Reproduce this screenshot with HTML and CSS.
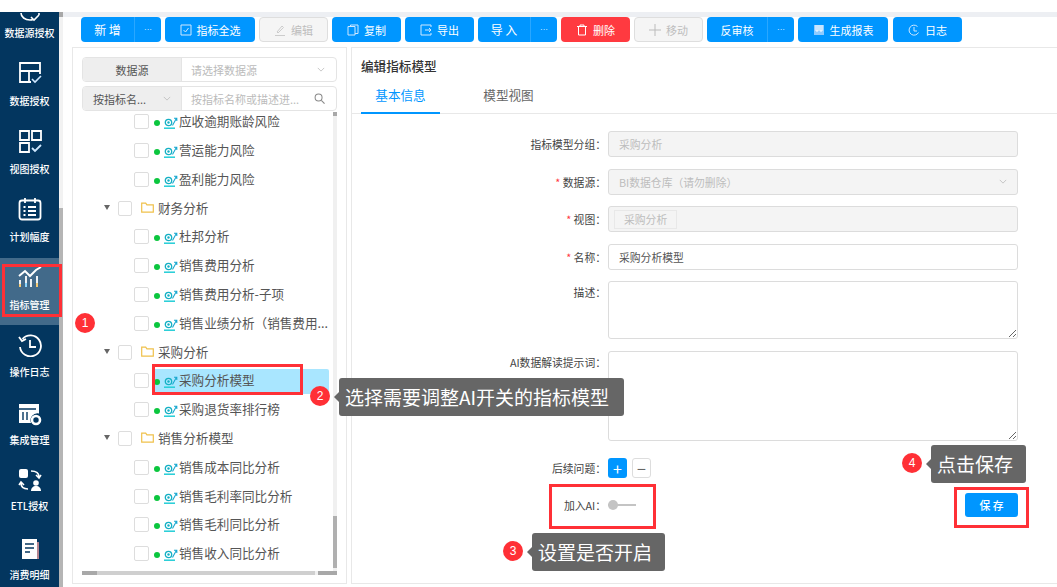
FILE: index.html
```html
<!DOCTYPE html>
<html lang="zh-CN">
<head>
<meta charset="utf-8">
<title>指标管理</title>
<link rel="stylesheet" href="styles.css">
</head>
<body>
<svg class="defs" width="0" height="0" aria-hidden="true">
  <symbol id="metric" viewBox="0 0 14 14">
    <circle cx="4.500" cy="6.500" r="3.200" fill="none" stroke="#14b0c4" stroke-width="1.300"/>
    <circle cx="4.500" cy="6.500" r="1.200" fill="#14b0c4"/>
    <path d="M8.500 9.500 12.300 2.500M10 2.200h2.800v2.800" fill="none" stroke="#19a8d0" stroke-width="1.100"/>
    <path d="M0 12.200h11" stroke="#22cdd6" stroke-width="1.500"/>
  </symbol>
  <symbol id="folder" viewBox="0 0 13 11">
    <path d="M.7 1.200h4l1.200 1.600h6.400v7.400H.7z" fill="none" stroke="#f0c14b" stroke-width="1.200"/>
  </symbol>
  <symbol id="chev" viewBox="0 0 10 6">
    <path d="M1 1l4 4 4-4" fill="none" stroke="#bbb" stroke-width="1"/>
  </symbol>
</svg>
<div class="topbar"></div>
<div class="app">
  <nav class="sidebar">
    <div class="nav-item first">
      <svg class="nav-icon" viewBox="0 0 24 14"><path d="M3 1c0 4 4 7 9 7 1 0 2 0 3-.5M21 1v2" fill="none" stroke="#fff" stroke-width="1.600"/><path d="M13 5l3 3 5-5" fill="none" stroke="#fff" stroke-width="1.600"/></svg>
      <span>数据源授权</span>
    </div>
    <div class="nav-item">
      <svg class="nav-icon" viewBox="0 0 24 24"><path d="M13 21H2V2h20v11M2 10h20M11 10v11" fill="none" stroke="#fff" stroke-width="1.800"/><path d="M14 18l3 3 6-6" fill="none" stroke="#cfe8ff" stroke-width="1.600"/></svg>
      <span>数据授权</span>
    </div>
    <div class="nav-item">
      <svg class="nav-icon" viewBox="0 0 24 24"><path d="M2 2h9v9H2zM14 2h9v9h-9zM2 14h9v9H2z" fill="none" stroke="#fff" stroke-width="1.800"/><path d="M14 19l3 3 6-6" fill="none" stroke="#cfe8ff" stroke-width="1.800"/></svg>
      <span>视图授权</span>
    </div>
    <div class="nav-item plan">
      <svg class="nav-icon" viewBox="0 0 24 24"><rect x="1.500" y="3.500" width="21" height="19" rx="2.500" fill="none" stroke="#fff" stroke-width="1.800"/><path d="M7 1v5M17 1v5M10 10h8M10 14h8M10 18h8M5.500 10h2M5.500 14h2M5.500 18h2" fill="none" stroke="#fff" stroke-width="1.800"/></svg>
      <span>计划幅度</span>
    </div>
    <div class="nav-item active">
      <svg class="nav-icon" viewBox="0 0 24 24"><path d="M1 11l6-5 5 5 6-6 5-3" fill="none" stroke="#fff" stroke-width="2"/><path d="M2 22v-7M8 22V11M13 22v-8M19 22V11" fill="none" stroke="#fff" stroke-width="1.800"/><path d="M2 22v-3M19 22v-4" stroke="#f6c667" stroke-width="1.800"/><path d="M8 22v-4" stroke="#7fd3ff" stroke-width="1.800"/></svg>
      <span>指标管理</span>
    </div>
    <div class="nav-item after">
      <svg class="nav-icon" viewBox="0 0 24 24"><path d="M4.500 6A10.500 10.500 0 1 1 2 14M1 4l3 4 4-2M12 7v7h6" fill="none" stroke="#fff" stroke-width="1.800"/></svg>
      <span>操作日志</span>
    </div>
    <div class="nav-item tight">
      <svg class="nav-icon" viewBox="0 0 24 24"><path d="M1 2h20v9.500a7 7 0 0 0-8 9.500H1z" fill="#fff"/><path d="M1 7h17M5 10v8M9 10v8" stroke="#03365f" stroke-width="1.400"/><circle cx="18" cy="18" r="4" fill="none" stroke="#fff" stroke-width="2.600"/></svg>
      <span>集成管理</span>
    </div>
    <div class="nav-item tight etl">
      <svg class="nav-icon" viewBox="0 0 24 24"><rect x="1" y="1" width="9" height="9" rx="2" fill="#fff"/><path d="M13 3c5 0 8 2 8 6M18 7l3 3 2-3M10 21c-5 0-7-2-7-6M1 17l2-3 3 3" fill="none" stroke="#fff" stroke-width="1.600"/><circle cx="18" cy="15" r="2.800" fill="#fff"/><path d="M13 23c0-3 2-5 5-5s5 2 5 5z" fill="#fff"/></svg>
      <span>ETL授权</span>
    </div>
    <div class="nav-item tight last">
      <svg class="nav-icon" viewBox="0 0 24 24"><path d="M4 2h15v20H4z" fill="#fff"/><path d="M7 7h9M7 11h9M7 15h5" stroke="#03365f" stroke-width="1.500"/><path d="M20 5v17" stroke="#f2a0a0" stroke-width="1.500"/></svg>
      <span>消费明细</span>
    </div>
  </nav>
  <div class="side-scroll"><div class="side-cap"></div><div class="side-thumb"></div></div>
  <main class="content">
    <div class="strip"></div>
    <div class="toolbar">
      <div class="btn w80 split"><span class="btn-main spaced">新 增</span><span class="btn-more">···</span></div>
      <button class="btn w90"><svg class="bi" viewBox="0 0 12 12"><path d="M1 1h10v10H1z" fill="none" stroke="#cfe8ff"/><path d="M3.500 6l2 2 3-4" fill="none" stroke="#cfe8ff"/></svg>指标全选</button>
      <button class="btn w69 off"><svg class="bi" viewBox="0 0 12 12"><path d="M3 8l5-6 1.500 1.500L4 9zM1 11.500h10" fill="none" stroke="#ccc"/></svg>编辑</button>
      <button class="btn w69"><svg class="bi" viewBox="0 0 12 12"><path d="M3.500 2.500V1H11v8.500H8M1 2.500h7V11H1z" fill="none" stroke="#cfe8ff"/></svg>复制</button>
      <button class="btn w69"><svg class="bi" viewBox="0 0 12 12"><path d="M11 3V1H1v10h10V9M5 6h6M9 4l2 2-2 2" fill="none" stroke="#cfe8ff"/></svg>导出</button>
      <div class="btn w79 split"><span class="btn-main spaced">导 入</span><span class="btn-more">···</span></div>
      <button class="btn w69 danger"><svg class="bi" viewBox="0 0 12 12"><path d="M1 2.500h10M4 2.500V1h4v1.500M2.500 2.500V11h7V2.500" fill="none" stroke="#fff"/></svg>删除</button>
      <button class="btn w69 off"><svg class="bi" viewBox="0 0 12 12"><path d="M6 0v12M0 6h12" stroke="#bbb"/></svg>移动</button>
      <div class="btn w87 split"><span class="btn-main">反审核</span><span class="btn-more">···</span></div>
      <button class="btn w90"><svg class="bi" viewBox="0 0 12 12"><path d="M1 1h10v10H1z" fill="#8fcbff"/><path d="M3 1v6h2V1M7 1v6h2V1" fill="none" stroke="#fff"/></svg>生成报表</button>
      <button class="btn w69 log"><svg class="bi" viewBox="0 0 12 12"><path d="M9.500 2.500a5 5 0 1 0 1 6M6 3v4h3" fill="none" stroke="#cfe8ff"/></svg>日志</button>
    </div>
    <div class="panels">
      <section class="panel left">
        <div class="filter">
          <span class="filter-label center">数据源</span>
          <span class="filter-field">请选择数据源<svg class="chev" viewBox="0 0 10 6"><use href="#chev"/></svg></span>
        </div>
        <div class="filter">
          <span class="filter-label pick">按指标名...<svg class="chev" viewBox="0 0 10 6"><use href="#chev"/></svg></span>
          <span class="filter-field">按指标名称或描述进...<svg class="search" viewBox="0 0 12 12"><circle cx="5" cy="5" r="3.800" fill="none" stroke="#888" stroke-width="1.100"/><path d="M8 8l3.500 3.500" stroke="#888" stroke-width="1.200"/></svg></span>
        </div>
        <div class="tree-wrap">
          <div class="tree-view">
            <ul class="tree">
              <li class="leaf"><i class="cb"></i><i class="dot"></i><svg class="mi"><use href="#metric"/></svg><span class="name">应收逾期账龄风险</span></li>
              <li class="leaf"><i class="cb"></i><i class="dot"></i><svg class="mi"><use href="#metric"/></svg><span class="name">营运能力风险</span></li>
              <li class="leaf"><i class="cb"></i><i class="dot"></i><svg class="mi"><use href="#metric"/></svg><span class="name">盈利能力风险</span></li>
              <li class="group"><i class="caret"></i><i class="cb"></i><svg class="fi"><use href="#folder"/></svg><span class="name">财务分析</span></li>
              <li class="leaf"><i class="cb"></i><i class="dot"></i><svg class="mi"><use href="#metric"/></svg><span class="name">杜邦分析</span></li>
              <li class="leaf"><i class="cb"></i><i class="dot"></i><svg class="mi"><use href="#metric"/></svg><span class="name">销售费用分析</span></li>
              <li class="leaf"><i class="cb"></i><i class="dot"></i><svg class="mi"><use href="#metric"/></svg><span class="name">销售费用分析-子项</span></li>
              <li class="leaf"><i class="cb"></i><i class="dot"></i><svg class="mi"><use href="#metric"/></svg><span class="name">销售业绩分析（销售费用...</span></li>
              <li class="group"><i class="caret"></i><i class="cb"></i><svg class="fi"><use href="#folder"/></svg><span class="name">采购分析</span></li>
              <li class="leaf selected"><i class="cb"></i><i class="dot"></i><svg class="mi"><use href="#metric"/></svg><span class="name">采购分析模型</span></li>
              <li class="leaf"><i class="cb"></i><i class="dot"></i><svg class="mi"><use href="#metric"/></svg><span class="name">采购退货率排行榜</span></li>
              <li class="group"><i class="caret"></i><i class="cb"></i><svg class="fi"><use href="#folder"/></svg><span class="name">销售分析模型</span></li>
              <li class="leaf"><i class="cb"></i><i class="dot"></i><svg class="mi"><use href="#metric"/></svg><span class="name">销售成本同比分析</span></li>
              <li class="leaf"><i class="cb"></i><i class="dot"></i><svg class="mi"><use href="#metric"/></svg><span class="name">销售毛利率同比分析</span></li>
              <li class="leaf"><i class="cb"></i><i class="dot"></i><svg class="mi"><use href="#metric"/></svg><span class="name">销售毛利同比分析</span></li>
              <li class="leaf"><i class="cb"></i><i class="dot"></i><svg class="mi"><use href="#metric"/></svg><span class="name">销售收入同比分析</span></li>
            </ul>
            <div class="vbar"><div class="vcap"></div><div class="vthumb"></div></div>
          </div>
          <div class="hbar"><div class="hcap"></div><div class="hthumb"></div><div class="hcap"></div><div class="hend"></div></div>
        </div>
      </section>
      <section class="panel right">
        <h2 class="title">编辑指标模型</h2>
        <div class="tabs"><span class="tab current">基本信息</span><span class="tab">模型视图</span></div>
        <form class="form">
          <div class="row"><label class="lbl">指标模型分组：</label><div class="field dis">采购分析</div></div>
          <div class="row"><label class="lbl"><b>*</b> 数据源：</label><div class="field dis sel">BI数据仓库（请勿删除）<svg class="chev" viewBox="0 0 10 6"><use href="#chev"/></svg></div></div>
          <div class="row"><label class="lbl"><b>*</b> 视图：</label><div class="field dis tagged"><span class="tag">采购分析</span></div></div>
          <div class="row"><label class="lbl"><b>*</b> 名称：</label><div class="field">采购分析模型</div></div>
          <div class="row tall"><label class="lbl">描述：</label><div class="field h58"><svg class="grip" viewBox="0 0 8 8"><path d="M1 8l7-7M5 8l3-3" stroke="#666"/></svg></div></div>
          <div class="row tall"><label class="lbl">AI数据解读提示词：</label><div class="field h90"><svg class="grip" viewBox="0 0 8 8"><path d="M1 8l7-7M5 8l3-3" stroke="#666"/></svg></div></div>
          <div class="row follow"><label class="lbl">后续问题：</label><span class="sq plus">+</span><span class="sq minus">−</span></div>
          <div class="row ai"><label class="lbl">加入AI：</label><span class="switch"><i></i></span><span class="save">保 存</span></div>
        </form>
      </section>
    </div>
  </main>
</div>

<div class="mark box-nav"></div>
<div class="mark box-sel"></div>
<div class="mark box-ai"></div>
<div class="mark box-save"></div>
<span class="num n1">1</span>
<span class="num n2">2</span>
<span class="num n3">3</span>
<span class="num n4">4</span>
<div class="tip t2">选择需要调整AI开关的指标模型</div>
<div class="tip t3">设置是否开启</div>
<div class="tip t4">点击保存</div>
</body>
</html>
```
FILE: styles.css
```css
* { box-sizing: border-box; }
html, body { margin: 0; padding: 0; }
body {
  width: 1057px; height: 587px; overflow: hidden; position: relative; background: #fff;
  font-family: "Noto Sans CJK SC", "Liberation Sans", sans-serif;
  font-size: 11px; color: #444;
}
.defs { position: absolute; }
.topbar { height: 12px; background: #fff; }
.app { display: flex; height: 575px; }

.sidebar { width: 59px; background: #03365f; overflow: hidden; color: #fff; flex: none; }
.nav-item { height: 68px; display: flex; flex-direction: column; align-items: center; padding-top: 15px; font-size: 10px; line-height: 14px; font-weight: 500; }
.nav-icon { width: 24px; height: 24px; margin-bottom: 9px; flex: none; }
.nav-item.first { height: 34px; padding: 0 0 6px; justify-content: flex-end; }
.nav-item.first .nav-icon { margin-bottom: 0; height: 14px; }
.nav-item.plan { height: 76px; }
.nav-item.active { background: #426a8a; height: 67px; padding-top: 7px; }
.nav-item.after { height: 67px; padding-top: 8px; }
.nav-item.after .nav-icon { margin-bottom: 8px; }
.nav-item.tight { height: 67px; padding-top: 10px; }
.nav-item.tight .nav-icon { margin-bottom: 7px; }
.nav-item.etl { padding-top: 9px; }
.nav-item.last { padding-top: 11px; }

.side-scroll { width: 4px; background: #f2f2f2; flex: none; display: flex; flex-direction: column; }
.side-cap { height: 5px; background: #a8a8a8; }
.side-thumb { width: 4px; height: 379px; margin-top: 191px; background: #b5b5b5; }

.content { flex: 1; min-width: 0; display: flex; flex-direction: column; }
.strip { height: 5px; background: #edeff3; flex: none; }
.toolbar { display: flex; gap: 4px; padding-left: 18px; height: 25px; flex: none; }
.btn {
  height: 25px; border: 0; border-radius: 4px; background: #0096ff; color: #fff;
  font: inherit; display: flex; align-items: center; justify-content: center; gap: 5px; padding: 0;
}
.w69 { width: 69px; } .w79 { width: 79px; } .w80 { width: 80px; } .w87 { width: 87px; } .w90 { width: 90px; }
.btn.log { margin-left: 1px; }
.btn.off { background: #f5f5f5; color: #bdbdbd; border: 1px solid #dedede; }
.btn.danger { background: #ff3a40; }
.bi { width: 12px; height: 12px; flex: none; }
.split { gap: 0; }
.btn-main { flex: 1; text-align: center; }
.spaced { font-size: 12px; }
.btn-more { width: 27px; height: 25px; line-height: 25px; text-align: center; border-left: 1px solid #2aa7ff; font-size: 8px; font-family: "Liberation Sans", sans-serif; }

.panels { display: flex; gap: 4px; padding: 5px 0 3px 9px; flex: 1; min-height: 0; }
.panel { border: 1px solid #e8e8e8; background: #fff; }
.left { width: 275px; padding: 9px 9px 8px; display: flex; flex-direction: column; gap: 4px; }
.right { flex: 1; margin-right: -1px; padding: 9px 0 0 9px; display: flex; flex-direction: column; min-width: 0; }

.filter { display: flex; height: 25px; border: 1px solid #e4e4e4; border-radius: 4px; flex: none; overflow: hidden; color: #bbb; }
.filter-label { width: 99px; background: #eeeeee; color: #555; display: flex; align-items: center; justify-content: space-between; border-right: 1px solid #e4e4e4; flex: none; }
.filter-label.center { justify-content: center; }
.filter-label.pick { padding: 0 10px; }
.filter-field { flex: 1; display: flex; align-items: center; justify-content: space-between; padding: 0 11px 0 9px; }
.chev { width: 8px; height: 5px; flex: none; }
.search { width: 11px; height: 11px; flex: none; }

.tree-wrap { flex: 1; min-height: 0; display: flex; flex-direction: column; margin-top: -3px; }
.tree-view { flex: 1; min-height: 0; display: flex; overflow: hidden; }
.tree { list-style: none; margin: -5.700px 0 0; padding: 0 4px 0 0; width: 251px; font-size: 12.600px; color: #555; flex: none; }
.tree li { height: 28.800px; display: flex; align-items: center; white-space: nowrap; }
.leaf { padding-left: 52px; }
.group { padding-left: 22px; }
.cb { width: 15px; height: 15px; border: 1px solid #ddd; border-radius: 2px; background: #fff; flex: none; margin-top: 2px; }
.dot { width: 6px; height: 6px; border-radius: 50%; background: #0bc63e; margin: 5px 3px 0 5px; flex: none; }
.mi { width: 14px; height: 14px; margin: 5px 1px 0 1px; flex: none; }
.caret { width: 0; height: 0; border: 3.500px solid transparent; border-top: 5px solid #666; border-bottom: 0; margin-right: 8px; flex: none; }
.group .cb { width: 14px; height: 15px; }
.fi { width: 13px; height: 11px; margin: 1px 4px 0 9px; flex: none; }
.selected { position: relative; }
.selected::before { content: ""; position: absolute; left: 71px; right: 0; top: 4px; bottom: 0; background: #a9e6ff; border-radius: 2px; }
.selected .dot, .selected .mi, .selected .name { position: relative; }

.vbar { width: 4px; background: #f0f0f0; display: flex; flex-direction: column; flex: none; }
.vcap { height: 4px; background: #a8a8a8; }
.vthumb { height: 52px; margin-top: 400px; background: #b0b0b0; }
.hbar { height: 4px; display: flex; flex: none; background: #f0f0f0; }
.hcap { width: 15px; background: #a8a8a8; flex: none; }
.hthumb { flex: 1; background: #cfcfcf; margin-right: 3px; }
.hend { width: 4px; background: #a8a8a8; flex: none; }

.title { margin: 0; font-size: 12.600px; line-height: 18px; font-weight: 500; color: #333; }
.tabs { display: flex; height: 31px; margin: 8px 0 0 -9px; padding-left: 9px; border-bottom: 1px solid #e8e8e8; font-size: 12.600px; flex: none; }
.tab { width: 79px; text-align: center; height: 31px; line-height: 24px; color: #666; margin-right: 29px; }
.tab.current { color: #0096ff; border-bottom: 2px solid #0096ff; }

.form { padding: 17px 39px 0 0; display: flex; flex-direction: column; gap: 11.500px; font-size: 10.800px; }
.row { display: flex; align-items: center; height: 26px; }
.row.tall { align-items: flex-start; height: auto; }
.lbl { width: 247px; flex: none; text-align: right; color: #444; padding-right: 2px; white-space: nowrap; }
.tall .lbl { line-height: 22px; }
.lbl b { color: #ff3a40; font-weight: 400; }
.field { flex: 1; height: 26px; border: 1px solid #dcdcdc; border-radius: 3px; background: #fff; padding: 0 10px; line-height: 24px; position: relative; color: #555; }
.field.dis { background: #f4f4f4; color: #bdbdbd; }
.sel { display: flex; align-items: center; justify-content: space-between; }
.tagged { display: flex; align-items: center; padding: 0 5px; }
.tag { border: 1px solid #e8e8e8; padding: 0 9px; line-height: 17px; height: 19px; background: #f4f4f4; }
.h58 { height: 58px; }
.h90 { height: 90px; }
.grip { position: absolute; right: 1px; bottom: 1px; width: 8px; height: 8px; }
.follow { height: 20px; margin-top: 5.500px; }
.sq { width: 19px; height: 20px; border-radius: 3px; display: flex; align-items: center; justify-content: center; font-size: 16px; line-height: 1; margin-right: 5px; }
.plus { background: #0096ff; color: #fff; }
.minus { background: #fff; color: #666; border: 1px solid #ddd; }
.ai { height: 24px; margin-top: 4px; }
.switch { width: 28px; height: 2px; background: #c4c4c4; position: relative; }
.switch i { position: absolute; left: 0; top: -4px; width: 10px; height: 10px; border-radius: 50%; background: #c4c4c4; }
.save { margin-left: auto; width: 53px; height: 24px; line-height: 24px; text-align: center; color: #fff; background: #0096ff; border-radius: 3px; font-weight: 500; }

.mark { position: absolute; border: 3px solid #ff3036; pointer-events: none; }
.box-nav { left: 2px; top: 264px; width: 60px; height: 53px; }
.box-sel { left: 152px; top: 364px; width: 151px; height: 31px; }
.box-ai { left: 549px; top: 484px; width: 107px; height: 45px; }
.box-save { left: 954px; top: 487px; width: 75px; height: 41px; }
.num { position: absolute; width: 20px; height: 20px; border-radius: 50%; background: #ff3036; color: #fff; font-size: 12px; line-height: 20px; text-align: center; font-family: "Liberation Sans", sans-serif; }
.n1 { left: 75px; top: 313px; }
.n2 { left: 310px; top: 386px; }
.n3 { left: 503px; top: 541px; }
.n4 { left: 902px; top: 453px; }
.tip { position: absolute; height: 38px; line-height: 38px; background: #666; color: #fff; border-radius: 3px; font-size: 19px; padding: 0 6px; white-space: nowrap; }
.tip::before { content: ""; position: absolute; left: -5px; top: 14px; border: 5px solid transparent; border-left: 0; border-right-color: #666; }
.t2 { left: 339px; top: 378px; width: 285px; }
.t3 { left: 532px; top: 533px; width: 133px; }
.t4 { left: 931px; top: 445px; width: 95px; }
```
